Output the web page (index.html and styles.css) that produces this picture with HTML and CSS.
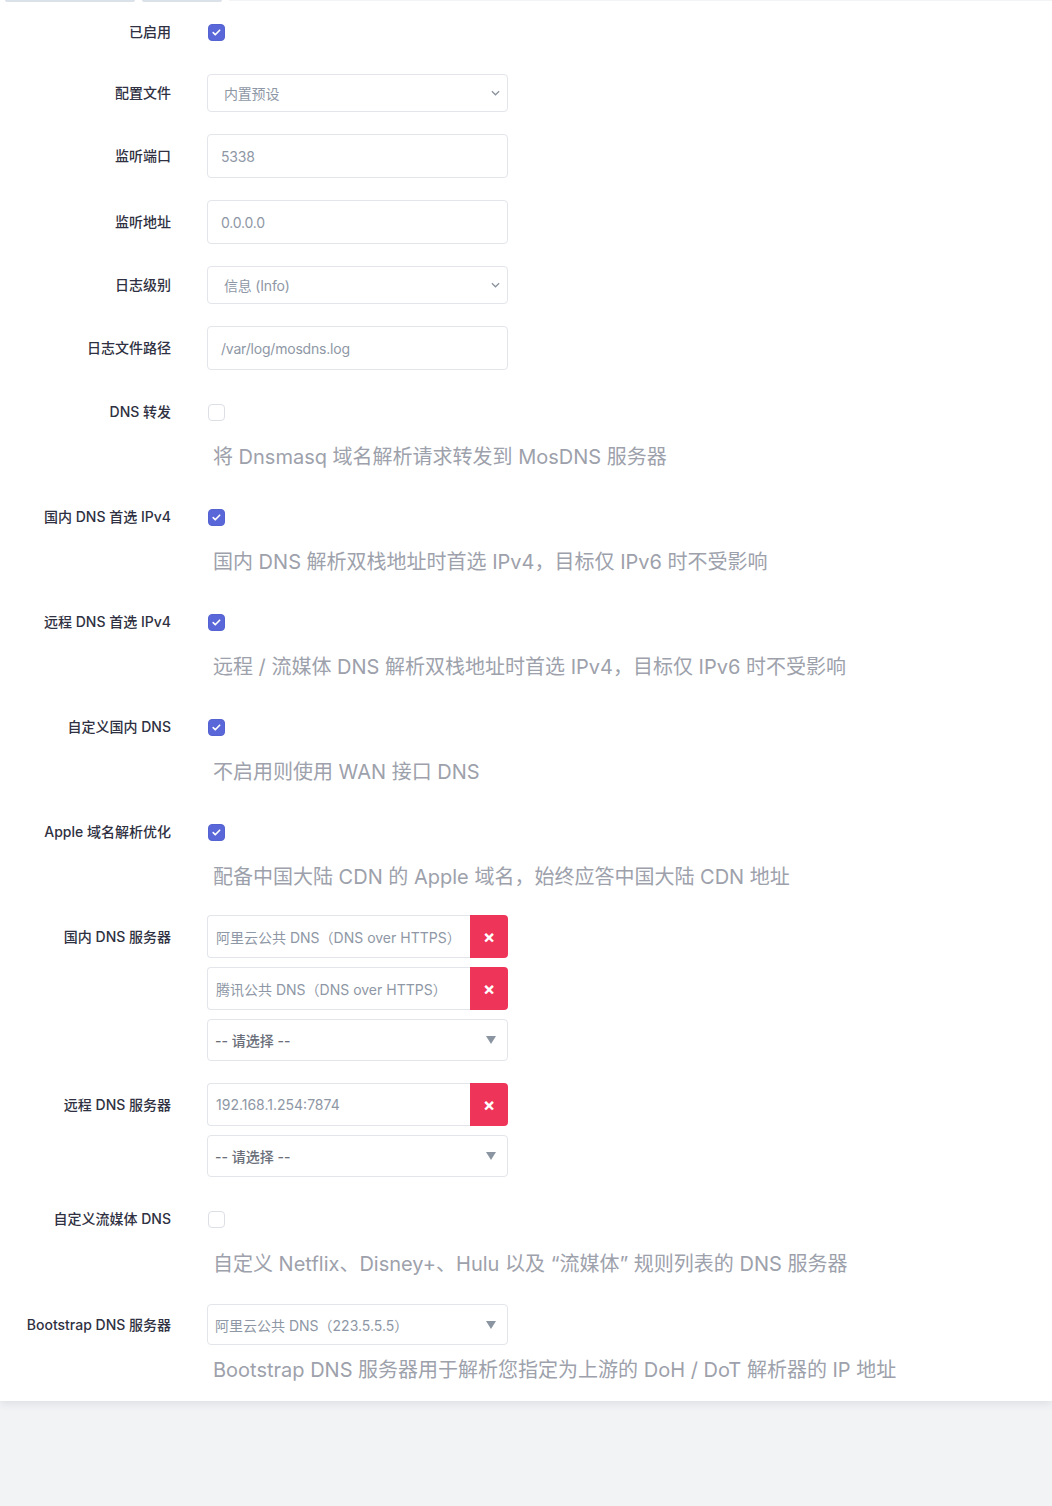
FILE: index.html
```html
<!DOCTYPE html>
<html lang="zh-CN">
<head>
<meta charset="utf-8">
<title>MosDNS</title>
<link rel="stylesheet" href="styles.css">
</head>
<body>
<div class="card">
  <div class="tabs"><span class="tab tab-a"></span><span class="tab tab-b"></span><span class="tab-rest"></span></div>
  <div class="form">
    <div class="row">
      <div class="label h40">已启用</div>
      <div class="field">
        <div class="check-wrap"><span class="cb on"><svg viewBox="0 0 16 16" width="11" height="11"><path d="M3.2 8.3l3 3 6.4-6.6" fill="none" stroke="#fff" stroke-width="2.4" stroke-linecap="round" stroke-linejoin="round"/></svg></span></div>
      </div>
    </div>
    <div class="row">
      <div class="label h38">配置文件</div>
      <div class="field">
        <div class="select"><span>内置预设</span><svg class="chev" viewBox="0 0 10 6" width="9" height="6"><path d="M1 1l4 4 4-4" fill="none" stroke="#8a929c" stroke-width="1.4"/></svg></div>
      </div>
    </div>
    <div class="row">
      <div class="label h44">监听端口</div>
      <div class="field"><div class="input">5338</div></div>
    </div>
    <div class="row">
      <div class="label h44">监听地址</div>
      <div class="field"><div class="input">0.0.0.0</div></div>
    </div>
    <div class="row">
      <div class="label h38">日志级别</div>
      <div class="field">
        <div class="select"><span>信息 (Info)</span><svg class="chev" viewBox="0 0 10 6" width="9" height="6"><path d="M1 1l4 4 4-4" fill="none" stroke="#8a929c" stroke-width="1.4"/></svg></div>
      </div>
    </div>
    <div class="row">
      <div class="label h44">日志文件路径</div>
      <div class="field"><div class="input">/var/log/mosdns.log</div></div>
    </div>
    <div class="row">
      <div class="label h40">DNS 转发</div>
      <div class="field">
        <div class="check-wrap"><span class="cb off"></span></div>
        <div class="desc">将 Dnsmasq 域名解析请求转发到 MosDNS 服务器</div>
      </div>
    </div>
    <div class="row">
      <div class="label h40">国内 DNS 首选 IPv4</div>
      <div class="field">
        <div class="check-wrap"><span class="cb on"><svg viewBox="0 0 16 16" width="11" height="11"><path d="M3.2 8.3l3 3 6.4-6.6" fill="none" stroke="#fff" stroke-width="2.4" stroke-linecap="round" stroke-linejoin="round"/></svg></span></div>
        <div class="desc">国内 DNS 解析双栈地址时首选 IPv4，目标仅 IPv6 时不受影响</div>
      </div>
    </div>
    <div class="row">
      <div class="label h40">远程 DNS 首选 IPv4</div>
      <div class="field">
        <div class="check-wrap"><span class="cb on"><svg viewBox="0 0 16 16" width="11" height="11"><path d="M3.2 8.3l3 3 6.4-6.6" fill="none" stroke="#fff" stroke-width="2.4" stroke-linecap="round" stroke-linejoin="round"/></svg></span></div>
        <div class="desc">远程 / 流媒体 DNS 解析双栈地址时首选 IPv4，目标仅 IPv6 时不受影响</div>
      </div>
    </div>
    <div class="row">
      <div class="label h40">自定义国内 DNS</div>
      <div class="field">
        <div class="check-wrap"><span class="cb on"><svg viewBox="0 0 16 16" width="11" height="11"><path d="M3.2 8.3l3 3 6.4-6.6" fill="none" stroke="#fff" stroke-width="2.4" stroke-linecap="round" stroke-linejoin="round"/></svg></span></div>
        <div class="desc">不启用则使用 WAN 接口 DNS</div>
      </div>
    </div>
    <div class="row">
      <div class="label h40">Apple 域名解析优化</div>
      <div class="field">
        <div class="check-wrap"><span class="cb on"><svg viewBox="0 0 16 16" width="11" height="11"><path d="M3.2 8.3l3 3 6.4-6.6" fill="none" stroke="#fff" stroke-width="2.4" stroke-linecap="round" stroke-linejoin="round"/></svg></span></div>
        <div class="desc">配备中国大陆 CDN 的 Apple 域名，始终应答中国大陆 CDN 地址</div>
      </div>
    </div>
    <div class="row row-list1">
      <div class="label h43">国内 DNS 服务器</div>
      <div class="field">
        <div class="dlist">
          <div class="dl-item"><div class="dl-text">阿里云公共 DNS（DNS over HTTPS）</div><div class="dl-btn">×</div></div>
          <div class="dl-item"><div class="dl-text">腾讯公共 DNS（DNS over HTTPS）</div><div class="dl-btn">×</div></div>
          <div class="dl-select"><span>-- 请选择 --</span><span class="tri"></span></div>
        </div>
      </div>
    </div>
    <div class="row">
      <div class="label h43">远程 DNS 服务器</div>
      <div class="field">
        <div class="dlist">
          <div class="dl-item"><div class="dl-text">192.168.1.254:7874</div><div class="dl-btn">×</div></div>
          <div class="dl-select"><span>-- 请选择 --</span><span class="tri"></span></div>
        </div>
      </div>
    </div>
    <div class="row">
      <div class="label h40">自定义流媒体 DNS</div>
      <div class="field">
        <div class="check-wrap"><span class="cb off"></span></div>
        <div class="desc">自定义 Netflix、Disney+、Hulu 以及 “流媒体” 规则列表的 DNS 服务器</div>
      </div>
    </div>
    <div class="row">
      <div class="label h41">Bootstrap DNS 服务器</div>
      <div class="field">
        <div class="dl-select boot"><span>阿里云公共 DNS（223.5.5.5）</span><span class="tri"></span></div>
        <div class="desc">Bootstrap DNS 服务器用于解析您指定为上游的 DoH / DoT 解析器的 IP 地址</div>
      </div>
    </div>
  </div>
</div>
</body>
</html>
```

FILE: styles.css
```css
html, body {
  margin: 0;
  padding: 0;
}
body {
  background: #f2f3f5;
  font-family: Inter, "Noto Sans CJK SC", sans-serif;
  min-height: 1506px;
}
.card {
  background: #fff;
  padding-bottom: 13px;
  box-shadow: 0 3px 8px rgba(40, 60, 90, 0.10);
  position: relative;
}
.tabs {
  display: flex;
  height: 2px;
  gap: 7px;
  padding-left: 5px;
}
.tab {
  display: block;
  height: 2px;
  background: #dbe1e8;
  border-radius: 0 0 2px 2px;
}
.tab-a { width: 130px; }
.tab-b { width: 80px; }
.tab-rest {
  flex: 1;
  height: 1px;
  background: #f3f4f6;
}
.form {
  display: flex;
  flex-direction: column;
  gap: 22px;
  padding-top: 10px;
}
.row {
  display: flex;
  gap: 36px;
}
.row-list1 {
  margin-top: -2px;
}
.label {
  width: 171px;
  flex: none;
  text-align: right;
  font-size: 14px;
  font-weight: 500;
  color: #2f3142;
  white-space: nowrap;
}
.h38 { line-height: 38px; }
.h40 { line-height: 40px; }
.h41 { line-height: 41px; }
.h43 { line-height: 43px; }
.h44 { line-height: 44px; }
.field {
  display: flex;
  flex-direction: column;
  min-width: 0;
}
.check-wrap {
  height: 40px;
  display: flex;
  align-items: center;
  padding-left: 1px;
}
.cb {
  width: 17px;
  height: 17px;
  box-sizing: border-box;
  border-radius: 4px;
  display: flex;
  align-items: center;
  justify-content: center;
}
.cb.on {
  background: #5a67d8;
  border: 1px solid #5563d2;
}
.cb.off {
  background: #fff;
  border: 1px solid #dcdfe5;
}
.desc {
  margin-top: 11px;
  margin-bottom: 4px;
  padding-left: 6px;
  font-size: 20px;
  line-height: 28px;
  color: #9da1ab;
  white-space: nowrap;
}
.input {
  width: 301px;
  height: 44px;
  box-sizing: border-box;
  border: 1px solid #e2e5ea;
  border-radius: 4px;
  padding: 0 13px;
  display: flex;
  align-items: center;
  font-size: 14px;
  color: #8e97a5;
  letter-spacing: -0.2px;
}
.select {
  width: 301px;
  height: 38px;
  box-sizing: border-box;
  border: 1px solid #e2e5ea;
  border-radius: 4px;
  padding: 0 7px 0 16px;
  display: flex;
  align-items: center;
  justify-content: space-between;
  font-size: 14px;
  color: #8e97a5;
  letter-spacing: -0.2px;
}
.chev {
  display: block;
}
.dlist {
  display: flex;
  flex-direction: column;
  gap: 9px;
  width: 301px;
}
.dl-item {
  display: flex;
  height: 43px;
}
.dl-text {
  flex: 1;
  box-sizing: border-box;
  border: 1px solid #e2e5ea;
  border-right: none;
  border-radius: 4px 0 0 4px;
  padding-left: 8px;
  display: flex;
  align-items: center;
  font-size: 14px;
  color: #8e97a5;
  white-space: nowrap;
  overflow: hidden;
}
.dl-btn {
  width: 38px;
  flex: none;
  background: #ef3459;
  border-radius: 0 4px 4px 0;
  color: #fff;
  font-size: 18px;
  font-weight: 700;
  display: flex;
  align-items: center;
  justify-content: center;
  line-height: 1;
}
.dl-select {
  width: 301px;
  height: 42px;
  box-sizing: border-box;
  border: 1px solid #e2e5ea;
  border-radius: 4px;
  padding: 0 11px 0 7px;
  display: flex;
  align-items: center;
  justify-content: space-between;
  font-size: 14px;
  font-weight: 500;
  color: #6a6f7a;
}
.dl-select.boot {
  height: 41px;
  font-weight: 400;
  color: #8e97a5;
}
.tri {
  width: 0;
  height: 0;
  border-left: 5px solid transparent;
  border-right: 5px solid transparent;
  border-top: 8px solid #8b95a1;
}
```
